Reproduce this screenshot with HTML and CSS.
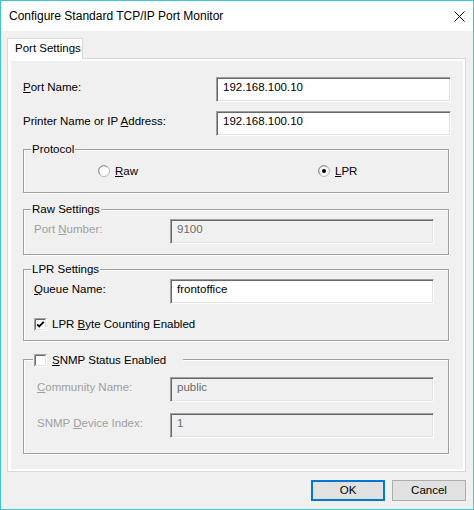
FILE: index.html
```html
<!DOCTYPE html>
<html>
<head>
<meta charset="utf-8">
<title>Configure Standard TCP/IP Port Monitor</title>
<link rel="stylesheet" href="styles.css">
</head>
<body>
<div class="window">
  <div class="titlebar">
    <span class="title">Configure Standard TCP/IP Port Monitor</span>
    <svg class="close" width="11" height="11" viewBox="0 0 11 11"><path d="M0.5 0.5 L10.5 10.5 M10.5 0.5 L0.5 10.5" stroke="#000" stroke-width="1" fill="none"/></svg>
  </div>
  <div class="content">
    <div class="tabstrip"><div class="tab">Port Settings</div></div>
    <div class="panel">
      <div class="page">
        <div class="row">
          <span class="label"><u>P</u>ort Name:</span>
          <div class="field wide">192.168.100.10</div>
        </div>
        <div class="row second">
          <span class="label">Printer Name or IP <u>A</u>ddress:</span>
          <div class="field wide">192.168.100.10</div>
        </div>

        <div class="group protocol">
          <div class="legend">Protocol</div>
          <div class="radios">
            <div class="radio">
              <svg width="12" height="12" viewBox="0 0 12 12"><circle cx="6" cy="6" r="5.5" fill="#fff" stroke="#b9b9b9"/><path d="M2.2 9.2 A4.6 4.6 0 0 1 9.2 2.2" stroke="#8a8a8a" fill="none"/></svg>
              <span><u>R</u>aw</span>
            </div>
            <div class="radio">
              <svg width="12" height="12" viewBox="0 0 12 12"><circle cx="6" cy="6" r="5.5" fill="#f4f4f4" stroke="#b9b9b9"/><path d="M2.2 9.2 A4.6 4.6 0 0 1 9.2 2.2" stroke="#8a8a8a" fill="none"/><circle cx="6" cy="6" r="2" fill="#000"/></svg>
              <span><u>L</u>PR</span>
            </div>
          </div>
        </div>

        <div class="group raw">
          <div class="legend">Raw Settings</div>
          <div class="grow disabled">
            <span class="glabel">Port <u>N</u>umber:</span>
            <div class="field narrow off">9100</div>
          </div>
        </div>

        <div class="group lpr">
          <div class="legend">LPR Settings</div>
          <div class="grow">
            <span class="glabel"><u>Q</u>ueue Name:</span>
            <div class="field narrow">frontoffice</div>
          </div>
          <div class="check">
            <svg width="13" height="13" viewBox="0 0 13 13"><rect x="0.5" y="0.5" width="12" height="12" fill="#fff" stroke="#fff"/><path d="M0.5 12.5 V0.5 H12.5" stroke="#a0a0a0" fill="none"/><path d="M1.5 11.5 V1.5 H11.5" stroke="#696969" fill="none"/><path d="M1.5 11.5 H11.5 V1.5" stroke="#e3e3e3" fill="none"/><path d="M3.2 6.3 L5.2 8.5 L9.8 3.8" stroke="#000" stroke-width="1.8" fill="none"/></svg>
            <span>LPR <u>B</u>yte Counting Enabled</span>
          </div>
        </div>

        <div class="group snmp">
          <div class="legend check-legend">
            <svg width="13" height="13" viewBox="0 0 13 13"><rect x="0.5" y="0.5" width="12" height="12" fill="#fff" stroke="#fff"/><path d="M0.5 12.5 V0.5 H12.5" stroke="#a0a0a0" fill="none"/><path d="M1.5 11.5 V1.5 H11.5" stroke="#696969" fill="none"/><path d="M1.5 11.5 H11.5 V1.5" stroke="#e3e3e3" fill="none"/></svg>
            <span><u>S</u>NMP Status Enabled</span>
          </div>
          <div class="grow disabled snmprow first">
            <span class="glabel"><u>C</u>ommunity Name:</span>
            <div class="field narrow off">public</div>
          </div>
          <div class="grow disabled snmprow second">
            <span class="glabel">SNMP <u>D</u>evice Index:</span>
            <div class="field narrow off">1</div>
          </div>
        </div>
      </div>
    </div>
    <div class="buttons">
      <button class="btn default">OK</button>
      <button class="btn">Cancel</button>
    </div>
  </div>
</div>
</body>
</html>
```
FILE: styles.css
```css
* { box-sizing: border-box; }
html, body { margin: 0; padding: 0; }
body {
  width: 474px;
  height: 510px;
  background: #f0f0f0;
  font-family: "Liberation Sans", Arial, sans-serif;
  font-size: 11.5px;
  color: #000;
  overflow: hidden;
}
.window {
  width: 474px;
  height: 510px;
  border: 1px solid #3dc7ce;
  background: #f0f0f0;
  display: flex;
  flex-direction: column;
}
.titlebar {
  height: 30px;
  background: #fff;
  display: flex;
  align-items: center;
  justify-content: space-between;
  padding: 0 8px 0 8px;
  flex: none;
}
.title { font-size: 12px; line-height: 16px; }
.close { display: block; }

.content {
  padding: 7px 7px 0 6px;
  display: flex;
  flex-direction: column;
}
.tabstrip { display: flex; height: 20px; }
.tab {
  position: relative;
  z-index: 1;
  width: 76px;
  height: 21px;
  background: #fff;
  border: 1px solid #d9d9d9;
  border-bottom: 0;
  padding: 0 0 0 7px;
  line-height: 19px;
  white-space: nowrap;
}
.panel {
  height: 414px;
  border: 1px solid #d9d9d9;
  background: #fff;
  padding: 2px 2px 2px 3px;
}
.page {
  height: 100%;
  background: #f0f0f0;
  padding: 16px 12px 0 12px;
}
.row {
  display: flex;
  align-items: flex-start;
  justify-content: space-between;
  height: 25px;
}
.row.second { margin-top: 9px; }
.label { line-height: 20px; white-space: nowrap; }

.field {
  height: 25px;
  border: 1px solid;
  border-color: #a0a0a0 #fff #fff #a0a0a0;
  box-shadow: inset 1px 1px 0 #696969, inset -1px -1px 0 #e3e3e3;
  background: #fff;
  padding: 0 0 0 6px;
  line-height: 19px;
  white-space: nowrap;
}
.field.wide { width: 235px; }
.field.narrow { width: 264px; }
.field.off { background: #f0f0f0; color: #6d6d6d; }

.group {
  width: 426px;
  border: 1px solid #a0a0a0;
  box-shadow: inset 1px 1px 0 #fff, 1px 1px 0 #fff;
}
.legend {
  width: fit-content;
  height: 14px;
  line-height: 14px;
  margin: -8px 0 0 7px;
  padding: 0 1px;
  background: #f0f0f0;
  white-space: nowrap;
}
.protocol { margin-top: 13px; height: 44px; }
.raw { margin-top: 16px; height: 46px; }
.lpr { margin-top: 14px; height: 72px; }
.snmp { margin-top: 18px; height: 95px; }

.radios {
  display: grid;
  grid-template-columns: 220px auto;
  padding-left: 74px;
  margin-top: 8px;
  height: 14px;
}
.radio {
  display: flex;
  align-items: center;
  gap: 5px;
  line-height: 14px;
}
.radio svg { display: block; flex: none; }

.grow {
  display: flex;
  align-items: flex-start;
  height: 25px;
  margin-top: 3px;
  padding-left: 10px;
}
.glabel { width: 136px; flex: none; white-space: nowrap; line-height: 21px; }
.disabled .glabel { color: #a0a0a0; }
.snmprow { padding-left: 13px; }
.snmprow .glabel { width: 133px; }
.snmprow.first { margin-top: 10px; }
.snmprow.second { margin-top: 11px; }

.check {
  display: flex;
  align-items: center;
  gap: 5px;
  margin-top: 14px;
  padding-left: 10px;
  height: 13px;
  line-height: 13px;
}
.check svg { display: block; flex: none; }
.check-legend {
  display: flex;
  align-items: center;
  gap: 5px;
  margin: -7px 0 0 9px;
  padding: 0 17px 0 1px;
}
.check-legend svg { display: block; flex: none; }

.buttons {
  display: flex;
  justify-content: flex-end;
  gap: 7px;
  margin-top: 8px;
}
.btn {
  width: 74px;
  height: 21px;
  padding: 0;
  margin: 0;
  background: #e1e1e1;
  border: 1px solid #adadad;
  font-family: "Liberation Sans", Arial, sans-serif;
  font-size: 11.5px;
  color: #000;
  line-height: 19px;
}
.btn.default { border: 2px solid #0078d7; line-height: 17px; }
```
